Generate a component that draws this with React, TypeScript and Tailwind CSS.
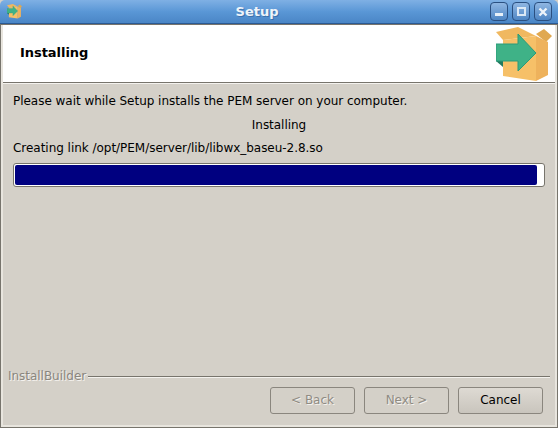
const font = { fontFamily: '"DejaVu Sans", sans-serif' };

function BoxIcon({ size }: { size: number }) {
  return (
    <svg width={size} height={size} viewBox="0 0 56 56" className="block">
      <path d="M0 5 L22 0 L40 9 L7 13 Z" fill="#f0b860" />
      <path d="M40 7 L48 2 L56 9 L50 15 Z" fill="#e0a850" />
      <path d="M7 13 L40 9 L40 54 L7 49 Z" fill="#f6c068" />
      <path d="M40 9 L52 15 L52 48 L40 54 Z" fill="#eeb25c" />
      <path d="M0 34 L7 34 L7 40 Z" fill="#1f7a5f" />
      <path d="M0 17 L22 17 L22 7 L40 26 L22 44 L22 34 L0 34 Z" fill="#3fb287" stroke="#2a9a7a" strokeWidth="1" />
    </svg>
  );
}

function WinButton({ children }: { children: React.ReactNode }) {
  return (
    <div className="w-[18px] h-[19px] rounded-[4px] border border-[#2a4f80] bg-gradient-to-b from-[#8fb6e2] to-[#4f86c4] flex items-center justify-center">
      {children}
    </div>
  );
}

function Btn({ label, disabled }: { label: string; disabled?: boolean }) {
  return (
    <div
      className={`w-[85px] h-[27px] rounded-[3px] border border-[#8a867e] flex items-center justify-center text-[12px] tracking-[-0.03px] bg-gradient-to-b ${
        disabled
          ? "from-[#d4d0c8] to-[#d4d0c8] text-[#8f8b83] [text-shadow:1px_1px_0_#f4f2ee]"
          : "from-[#dedad3] to-[#c9c5bd] text-black"
      }`}
    >
      {label}
    </div>
  );
}

export default function App() {
  return (
    <div className="w-[558px] h-[428px] flex flex-col overflow-hidden bg-[#d4d0c8]" style={font}>
      <div className="h-[24px] shrink-0 flex items-center justify-between pl-[7px] pr-[6px] rounded-t-[5px] border-b border-[#2a5a94] bg-gradient-to-b from-[#7fb0e4] via-[#5a97d6] to-[#4a86c6] relative">
        <BoxIcon size={15} />
        <div className="absolute inset-x-0 top-[3px] pr-[44px] text-center text-[13px] font-bold text-[#ffffff] opacity-90 leading-[17px] [text-shadow:1px_1px_0_#3a6ea8]">
          Setup
        </div>
        <div className="flex gap-[4px]">
          <WinButton>
            <div className="w-[8px] h-[3px] mt-[6px] bg-[#e8f0f8]" />
          </WinButton>
          <WinButton>
            <div className="w-[9px] h-[9px] border-2 border-[#dbe8f5]" />
          </WinButton>
          <WinButton>
            <svg width="10" height="10" viewBox="0 0 10 10">
              <path d="M1.5 1.5 L8.5 8.5 M8.5 1.5 L1.5 8.5" stroke="#eef4fa" strokeWidth="2.4" />
            </svg>
          </WinButton>
        </div>
      </div>

      <div className="flex-1 flex flex-col border-x-[3px] border-b-[3px] border-[#e8e5de] outline outline-1 -outline-offset-1 outline-[#77746c]">
        <div className="h-[59px] shrink-0 bg-white flex items-center justify-between pl-[17px] pr-[3px] border-b border-[#77746c]">
          <span className="text-[13px] font-bold text-black tracking-[-0.05px]">Installing</span>
          <div className="mt-[3px]"><BoxIcon size={56} /></div>
        </div>
        <div className="h-px shrink-0 bg-[#f4f2ee]" />

        <div className="flex-1 flex flex-col px-[5px] text-[12px] leading-[15px] tracking-[-0.03px]">
          <div className="pl-[5px] mt-[10px] text-black">
            Please wait while Setup installs the PEM server on your computer.
          </div>
          <div className="mt-[9px] text-center text-black">Installing</div>
          <div className="pl-[5px] mt-[8px] text-black">
            Creating link /opt/PEM/server/lib/libwx_baseu-2.8.so
          </div>
          <div className="mt-[7px] ml-[5px] w-[532px] h-[24px] rounded-[3px] border border-[#77746c] bg-white py-[1px] pl-[1px] pr-[7px]">
            <div className="w-full h-full bg-[#000080] rounded-[2px]" />
          </div>

          <div className="mt-auto flex items-center gap-[2px] text-[#8a867e] [text-shadow:1px_1px_0_#f4f2ee]">
            <span>InstallBuilder</span>
            <div className="flex-1 h-[2px] border-t border-b border-t-[#77746c] border-b-[#f4f2ee]" />
          </div>
          <div className="flex justify-end gap-[9px] pr-[7px] mt-[3px] mb-[11px]">
            <Btn label="< Back" disabled />
            <Btn label="Next >" disabled />
            <Btn label="Cancel" />
          </div>
        </div>
      </div>
    </div>
  );
}
